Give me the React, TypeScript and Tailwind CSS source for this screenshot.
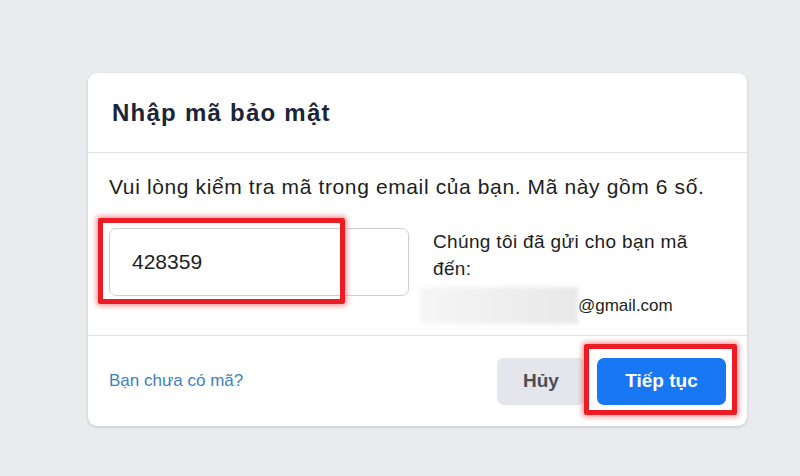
import React from "react";

export default function App() {
  return (
    <div
      className="w-[800px] h-[476px] bg-[#e9ebee] pt-[73px] pl-[88px] overflow-hidden"
      style={{ fontFamily: '"Liberation Sans", Arial, sans-serif' }}
    >
      <div className="w-[659px] h-[353px] bg-white rounded-[9px] shadow-[0_1px_3px_rgba(0,0,0,0.18)] flex flex-col">
        <div className="h-[80px] flex items-center pl-[24px] border-b border-[#dddfe2]">
          <h1 className="text-[24px] font-bold text-[#1a2539] leading-none tracking-[1.25px]">Nhập mã bảo mật</h1>
        </div>
        <div className="h-[183px] border-b border-[#dddfe2] px-[21px] pt-[22px]">
          <p className="text-[21px] leading-[23px] text-[#1c1e21] tracking-[0.62px] whitespace-nowrap">
            Vui lòng kiểm tra mã trong email của bạn. Mã này gồm 6 số.
          </p>
          <div className="flex mt-[30px]">
            <div className="relative">
              <div className="w-[300px] h-[68px] border border-[#ccd0d5] rounded-[7px] flex items-center pl-[22px] text-[21px] text-[#1c1e21]">
                428359
              </div>
              <div className="absolute left-[-11px] top-[-10px] w-[247px] h-[86px] border-[5px] border-[#ec1c24] rounded-[2px] shadow-[0_0_5px_2px_rgba(236,28,36,0.45)]" />
            </div>
            <div className="ml-[24px] flex flex-col text-[#1c1e21]">
              <div className="leading-[27px] w-[280px] text-[19px] tracking-[0.35px]">
                Chúng tôi đã gửi cho bạn mã đến:
              </div>
              <div className="flex items-center mt-[5px] ml-[-13px]">
                <div className="w-[158px] h-[37px] bg-gradient-to-r from-[#f6f6f6] via-[#efefef] to-[#e8e8e8] blur-[2px]" />
                <span className="text-[17px] leading-none">@gmail.com</span>
              </div>
            </div>
          </div>
        </div>
        <div className="flex-1 flex items-center justify-between pl-[21px] pr-[21px]">
          <span className="text-[17px] text-[#3d7fbe]">Bạn chưa có mã?</span>
          <div className="flex items-center gap-[12px]">
            <button className="w-[88px] h-[47px] rounded-[7px] bg-[#e4e6eb] text-[#4b4f56] font-bold text-[19px]">
              Hủy
            </button>
            <div className="relative">
              <button className="w-[129px] h-[47px] rounded-[7px] bg-[#1877f2] text-white font-bold text-[19px]">
                Tiếp tục
              </button>
              <div className="absolute left-[-13px] top-[-14px] w-[153px] h-[71px] border-[5px] border-[#ec1c24] rounded-[2px] shadow-[0_0_5px_2px_rgba(236,28,36,0.45)]" />
            </div>
          </div>
        </div>
      </div>
    </div>
  );
}
